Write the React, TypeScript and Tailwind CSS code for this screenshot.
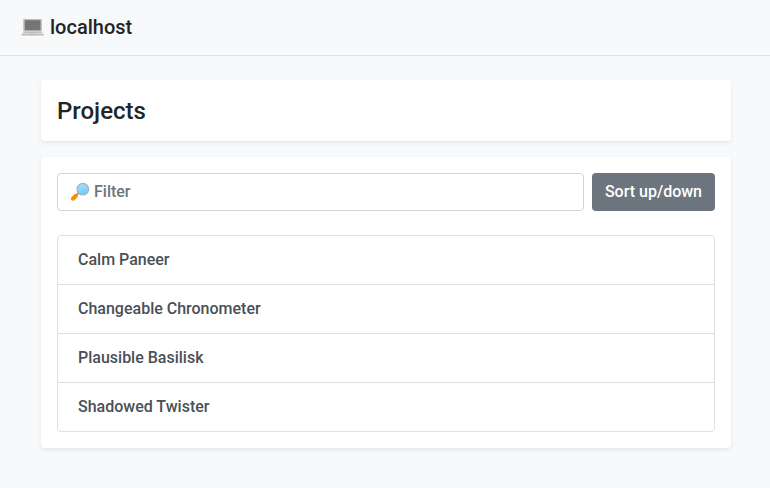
const projects = ["Calm Paneer", "Changeable Chronometer", "Plausible Basilisk", "Shadowed Twister"];

function LaptopIcon() {
  return (
    <svg width="24" height="20" viewBox="0 0 24 20" aria-hidden="true" className="shrink-0">
      <rect x="2.2" y="2" width="18.7" height="12.7" rx="1" fill="#bdbdbd" />
      <rect x="3.8" y="3.2" width="15.6" height="10" fill="#757575" />
      <path d="M2.4 14.1h18.3l2 3.2H.6z" fill="#e0e0e0" />
      <path d="M3.3 14.5h16.5l1 1.6H2.3z" fill="#bdbdbd" />
      <path d="M9 16.2h5.2l.3 1H8.7z" fill="#c8c8c8" />
      <path d="M.6 17h22.1v1q0 .6-.6.6H1.2q-.6 0-.6-.6z" fill="#bababa" />
    </svg>
  );
}

function MagnifierIcon() {
  return (
    <svg width="20" height="20" viewBox="0 0 20 20" aria-hidden="true" className="shrink-0">
      <defs>
        <linearGradient id="lens" x1="0.4" y1="0" x2="0.7" y2="1">
          <stop offset="0" stopColor="#a9defa" />
          <stop offset="1" stopColor="#68c8fb" />
        </linearGradient>
      </defs>
      <path d="m6.6 13 2-2" stroke="#9e9e9e" strokeWidth="2" />
      <path d="M2.9 16.7 5.9 13.8" stroke="#fb8c00" strokeWidth="4" strokeLinecap="round" />
      <circle cx="12.8" cy="7.2" r="5.8" fill="url(#lens)" stroke="#a3b4bd" strokeWidth="1.2" />
    </svg>
  );
}

export default function App() {
  return (
    <div className="h-[488px] bg-[#f8f9fa] font-['Roboto',sans-serif] text-[#212529]">
      <header className="flex h-14 items-center gap-[5px] border-b border-[#dee2e6] pr-5 pb-0.5 pl-[21px] text-xl font-medium">
        <LaptopIcon />
        <span>localhost</span>
      </header>
      <main className="flex flex-col gap-4 pt-6 pr-[39px] pl-[41px]">
        <section className="flex h-[61px] items-center rounded bg-white px-4 shadow-[0_2px_4px_rgba(0,0,0,0.075)]">
          <h1 className="text-2xl font-medium">Projects</h1>
        </section>
        <section className="rounded bg-white p-4 shadow-[0_2px_4px_rgba(0,0,0,0.075)]">
          <div className="mb-6 flex gap-2">
            <label className="flex h-[38px] min-w-0 flex-1 items-center gap-1 rounded border border-[#ced4da] px-3">
              <MagnifierIcon />
              <input aria-label="Filter" placeholder="Filter" className="h-6 min-w-0 flex-1 font-medium outline-none placeholder:text-[#6c757d]" />
            </label>
            <button className="h-[38px] rounded bg-[#6c757d] px-[13px] font-medium text-white">Sort up/down</button>
          </div>
          <ul className="divide-y divide-[#dfdfdf] rounded border border-[#dfdfdf] font-medium text-[#495057]">
            {projects.map((name) => (
              <li key={name} className="flex h-[49px] items-center px-5 last:h-12">{name}</li>
            ))}
          </ul>
        </section>
      </main>
    </div>
  );
}
